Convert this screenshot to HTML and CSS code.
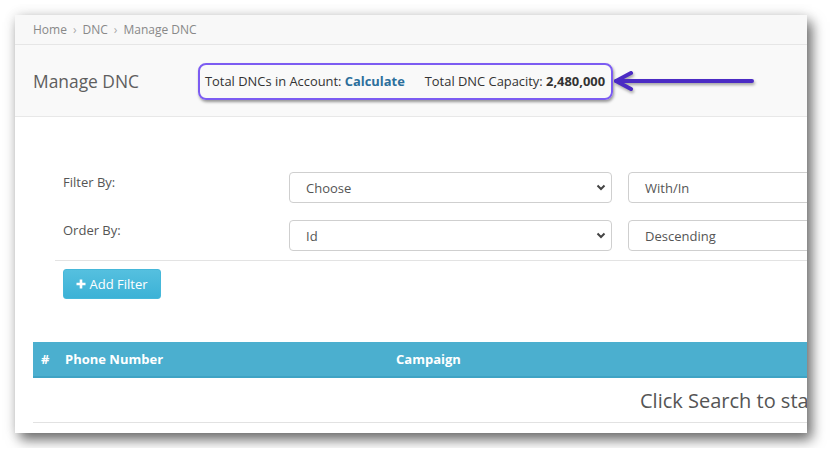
FILE: index.html
```html
<!DOCTYPE html>
<html>
<head>
<meta charset="utf-8">
<link rel="stylesheet" href="styles.css">
</head>
<body>
<div class="window">
  <div class="crumbs">
    <span>Home</span><span class="sep">›</span><span>DNC</span><span class="sep">›</span><span>Manage DNC</span>
  </div>
  <div class="header">
    <h1 class="title">Manage DNC</h1>
    <div class="stats">
      <span>Total DNCs in Account: <b class="calc">Calculate</b></span>
      <span class="cap">Total DNC Capacity: <b>2,480,000</b></span>
    </div>
    <svg class="arrow" width="146" height="30" viewBox="0 0 146 30">
      <g fill="none" stroke="#4b2bc4" stroke-width="4" stroke-linecap="round" stroke-linejoin="round">
        <path d="M3 14 H139"/>
        <path d="M18 6 L3 14 L18 22"/>
      </g>
    </svg>
  </div>
  <div class="content">
    <div class="filters">
      <div class="frow">
        <label class="flabel">Filter By:</label>
        <div class="sel"><span>Choose</span><svg class="chev" width="10" height="7" viewBox="0 0 10 7"><path d="M1.5 1.5 L5 5 L8.5 1.5" fill="none" stroke="#444" stroke-width="2"/></svg></div>
        <div class="sel"><span>With/In</span></div>
      </div>
      <div class="frow">
        <label class="flabel">Order By:</label>
        <div class="sel"><span>Id</span><svg class="chev" width="10" height="7" viewBox="0 0 10 7"><path d="M1.5 1.5 L5 5 L8.5 1.5" fill="none" stroke="#444" stroke-width="2"/></svg></div>
        <div class="sel"><span>Descending</span></div>
      </div>
      <div class="divider"></div>
      <button class="btn"><svg class="plus" width="10" height="10" viewBox="0 0 10 10"><path d="M5 0.5 V9.5 M0.5 5 H9.5" stroke="#fff" stroke-width="2.6"/></svg>Add Filter</button>
    </div>
    <table class="grid">
      <thead>
        <tr><th class="c-num">#</th><th class="c-phone">Phone Number</th><th class="c-camp">Campaign</th></tr>
      </thead>
      <tbody>
        <tr><td colspan="3" class="empty">Click Search to start</td></tr>
      </tbody>
    </table>
  </div>
</div>
</body>
</html>
```

FILE: styles.css
```css
html, body { margin: 0; padding: 0; background: #fff; }
body {
  padding: 15px;
  font-family: "Open Sans", "DejaVu Sans", sans-serif;
  color: #555;
}
.window {
  width: 792px;
  height: 418px;
  overflow: hidden;
  background: #fff;
  box-shadow: 5px 7px 12px rgba(0,0,0,0.55), 0 0 12px rgba(0,0,0,0.12);
}
.crumbs {
  height: 29px;
  display: flex;
  align-items: center;
  padding: 0 18px;
  background: #f8f8f8;
  border-bottom: 1px solid #e6e6e6;
  font-size: 12px;
  color: #888;
}
.sep { color: #aaa; margin: 0 6px; font-size: 12px; }
.header {
  height: 71px;
  display: flex;
  align-items: center;
  padding: 0 18px;
  background: #f9f9f9;
  border-bottom: 1px solid #e8e8e8;
}
.title {
  margin: 0;
  font-size: 17.4px;
  font-weight: 400;
  color: #5e5e5e;
  width: 165px;
  margin-top: 1px;
}
.stats {
  height: 33px;
  display: flex;
  align-items: center;
  padding: 0 6px 0 5px;
  border: 2px solid #7c5cf2;
  border-radius: 8px;
  box-shadow: 1px 2px 3px rgba(0,0,0,0.4);
  font-size: 12.9px;
  color: #333;
  margin-top: 1px;
}
.calc { color: #2c6f9c; }
.cap { margin-left: 20px; }
.arrow { margin-left: 0; margin-top: 2px; filter: drop-shadow(1px 2px 1.5px rgba(0,0,0,0.35)); }
.content { padding: 0 18px; }
.filters { margin: 55px 0 0 22px; }
.frow { display: flex; height: 31px; margin-bottom: 17px; padding-left: 8px; }
.flabel { width: 226px; flex: none; font-size: 13px; line-height: 20px; color: #555; }
.sel {
  flex: none;
  width: 305px;
  height: 29px;
  border: 1px solid #cfcfcf;
  border-radius: 4px;
  display: flex;
  align-items: center;
  padding: 0 0 0 16px;
  box-sizing: content-box;
  margin-right: 16px;
  font-size: 13px;
  color: #555;
}
.sel span { flex: 1; }
.chev { margin-right: 5px; }
.divider { height: 1px; background: #e3e3e3; margin: -8px 0 8px 0; width: 800px; }
.btn {
  margin-left: 8px;
  height: 30px;
  width: 98px;
  border: 1px solid #46b8da;
  border-radius: 3px;
  background: linear-gradient(#55c0df, #3cb2d6);
  color: #fff;
  font-family: "Open Sans", sans-serif;
  font-size: 13px;
  display: flex;
  align-items: center;
  justify-content: center;
  gap: 3px;
  padding: 0;
}
.grid {
  margin-top: 43px;
  border-collapse: collapse;
  width: 1300px;
  table-layout: fixed;
}
.grid th {
  height: 34px;
  background: #4bafcf;
  border-bottom: 2px solid #3fa3c4;
  color: #fff;
  font-size: 13px;
  font-weight: 700;
  text-align: left;
  padding: 0;
}
.grid th.c-num { width: 24px; padding-left: 8px; }
.grid th.c-phone { width: 331px; }
.grid td.empty {
  height: 44px;
  border-bottom: 1px solid #e2e2e2;
  padding: 0 0 0 607px;
  font-size: 20px;
  color: #555;
}
```
